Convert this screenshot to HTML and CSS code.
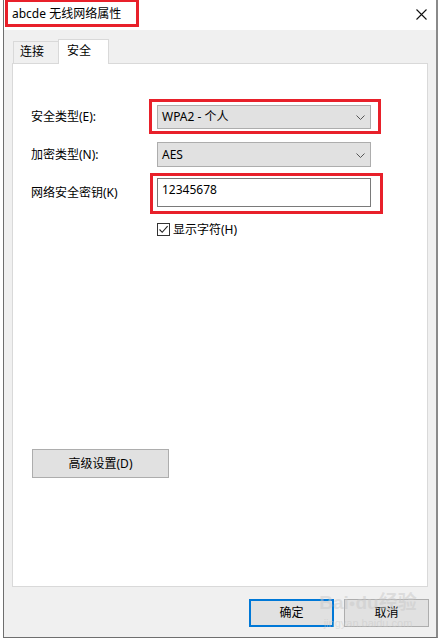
FILE: index.html
```html
<!DOCTYPE html>
<html lang="zh-CN">
<head>
<meta charset="utf-8">
<title>abcde 无线网络属性</title>
<link rel="stylesheet" href="styles.css">
</head>
<body>
<div class="window">
  <div class="titlebar">
    <span class="title">abcde 无线网络属性</span>
    <span class="mark mark-title"></span>
    <svg class="close" width="11" height="11" viewBox="0 0 11 11"><path d="M0.5 0.5 L10.5 10.5 M10.5 0.5 L0.5 10.5" stroke="#111" stroke-width="1.1" fill="none"/></svg>
  </div>
  <div class="client">
    <div class="tabs">
      <div class="tab">连接</div>
      <div class="tab active">安全</div>
    </div>
    <div class="panel">
      <div class="row row1">
        <div class="label">安全类型(E):</div>
        <div class="ctl">
          <div class="select"><span>WPA2 - 个人</span><svg class="chev" width="9" height="5" viewBox="0 0 9 5"><path d="M0.5 0.5 L4.5 4.5 L8.5 0.5" stroke="#555" stroke-width="1" fill="none"/></svg></div>
          <span class="mark mark-sel"></span>
        </div>
      </div>
      <div class="row row2">
        <div class="label">加密类型(N):</div>
        <div class="ctl">
          <div class="select tall"><span>AES</span><svg class="chev" width="9" height="5" viewBox="0 0 9 5"><path d="M0.5 0.5 L4.5 4.5 L8.5 0.5" stroke="#555" stroke-width="1" fill="none"/></svg></div>
        </div>
      </div>
      <div class="row row3">
        <div class="label">网络安全密钥(K)</div>
        <div class="ctl">
          <div class="input">12345678</div>
          <span class="mark mark-inp"></span>
        </div>
      </div>
      <div class="row row4">
        <div class="label"></div>
        <div class="check">
          <span class="box"><svg width="11" height="11" viewBox="0 0 11 11"><path d="M1.5 5.5 L4.2 8.3 L9.6 2.2" stroke="#222" stroke-width="1.1" fill="none"/></svg></span>
          <span>显示字符(H)</span>
        </div>
      </div>
      <div class="adv-wrap"><button class="btn adv">高级设置(D)</button></div>
    </div>
    <div class="buttons">
      <button class="btn ok">确定</button>
      <button class="btn cancel">取消</button>
    </div>
    <div class="watermark"><span class="wm-big">Bai<span class="paw">●</span>du经验</span><span class="wm-small">jingyan.baidu.com</span></div>
  </div>
</div>
</body>
</html>
```
FILE: styles.css
```css
* { box-sizing: border-box; }
html, body { margin: 0; padding: 0; background: #ffffff; }
body {
  width: 441px; height: 640px; overflow: hidden;
  font-family: "Noto Sans", "Noto Sans CJK SC", sans-serif;
  font-size: 12px; color: #000;
}
.window {
  margin-left: 3px;
  width: 435px;
  height: 638px;
  border: 1px solid #6e6e6e;
  border-top: none;
  border-right: 2px solid #8a8a8a;
  background: #f0f0f0;
  display: flex;
  flex-direction: column;
  position: relative;
}
.titlebar {
  height: 30px;
  background: #fff;
  position: relative;
  display: flex;
  align-items: center;
  padding-left: 8px;
}
.title { font-size: 12px; line-height: 14px; margin-top: -2px; }
.close { position: absolute; left: 412px; top: 9px; }
.mark { position: absolute; border: 3px solid #e8202a; pointer-events: none; }
.mark-title { left: 1px; top: -1px; width: 134px; height: 28px; }
.client { flex: 1; display: flex; flex-direction: column; padding: 9px 8px 0 8px; position: relative; }
.tabs { display: flex; padding-left: 1px; height: 24px; align-items: flex-end; position: relative; z-index: 1; }
.tab {
  height: 22px; width: 46px;
  border: 1px solid #d9d9d9; border-bottom: none;
  background: #f0f0f0;
  padding: 2px 0 0 6px;
  line-height: 16px;
}
.tab.active {
  height: 25px; width: 51px; margin-left: -1px; margin-bottom: -1px;
  background: #fff;
  padding: 3px 0 0 8px;
}
.panel {
  width: 416px;
  height: 524px;
  border: 1px solid #d9d9d9;
  background: #fff;
  padding: 41px 0 0 18px;
  display: flex;
  flex-direction: column;
}
.row { display: flex; align-items: center; }
.label { width: 126px; line-height: 16px; }
.ctl { position: relative; width: 214px; }
.select {
  height: 24px;
  background: #e1e1e1;
  border: 1px solid #adadad;
  display: flex; align-items: center; justify-content: space-between;
  padding: 0 5px 0 4px;
  line-height: 16px;
}
.select.tall { height: 25px; }
.chev { margin-top: 1px; }
.row2 { margin-top: 13px; }
.row3 { margin-top: 11px; }
.input {
  height: 29px;
  border: 1px solid #7a7a7a;
  background: #fff;
  padding: 3px 0 0 4px;
  line-height: 16px;
}
.mark-sel { left: -8px; top: -6px; right: -10px; bottom: -5px; }
.mark-inp { left: -7px; top: -5px; right: -12px; bottom: -7px; }
.row4 { margin-top: 15px; }
.check { display: flex; align-items: center; gap: 3px; line-height: 15px; }
.box {
  width: 13px; height: 13px; border: 1px solid #333; background: #fff;
  display: flex; align-items: center; justify-content: center;
}
.btn {
  font-family: "Noto Sans", "Noto Sans CJK SC", sans-serif;
  font-size: 12px; color: #000;
  background: #e1e1e1;
  border: 1px solid #adadad;
  padding: 0; margin: 0;
  line-height: 16px;
}
.adv-wrap { margin-top: 212px; margin-left: 1px; }
.adv { width: 137px; height: 29px; }
.buttons { display: flex; justify-content: flex-end; gap: 10px; padding-right: 0; margin-top: 12px; margin-right: -1px; }
.ok { width: 85px; height: 28px; border: 2px solid #0078d7; }
.cancel { width: 85px; height: 28px; }
.watermark {
  position: absolute; left: 318px; top: 562px;
  width: 92px;
  display: flex; flex-direction: column; align-items: center;
  color: rgba(200,200,200,0.5);
  pointer-events: none;
  font-family: "Liberation Sans", "Noto Sans CJK SC", sans-serif;
}
.wm-big { font-size: 19px; font-weight: bold; line-height: 22px; white-space: nowrap; }
.paw { font-size: 11px; vertical-align: top; }
.wm-small { font-size: 11px; line-height: 13px; margin-top: 3px; white-space: nowrap; }
```
